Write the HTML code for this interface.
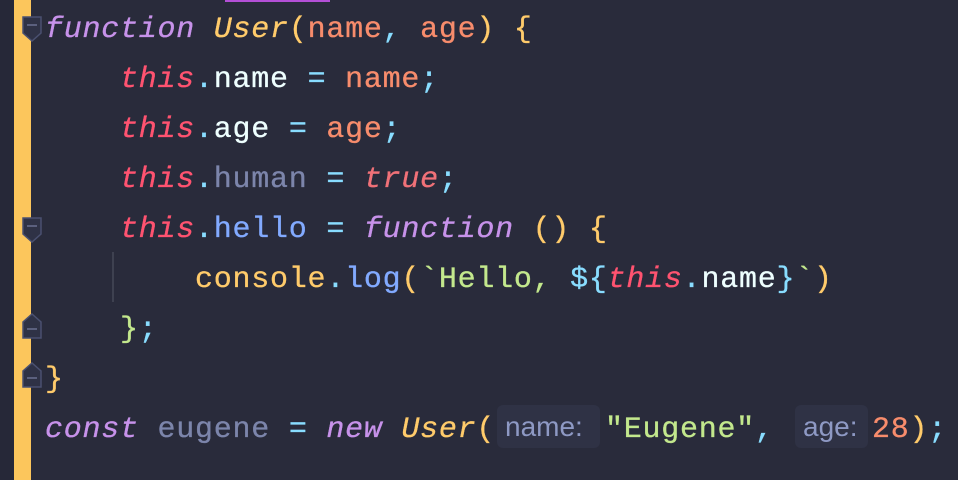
<!DOCTYPE html>
<html><head><meta charset="utf-8"><style>
html,body{margin:0;padding:0}
body{width:958px;height:480px;background:#292b3b;position:relative;overflow:hidden;font-family:"Liberation Mono",monospace;}
.l{position:absolute;left:45px;font-size:30px;letter-spacing:0.75px;white-space:pre;line-height:50px;height:50px;color:#eeffff;-webkit-text-stroke:0.3px currentColor}
.i{font-style:italic}
.kw{color:#c792ea;font-style:italic}
.fn{color:#ffcb6b}
.pa{color:#f78c6c}
.th{color:#ff5370;font-style:italic}
.op{color:#89ddff}
.gr{color:#7c85ab}
.bl{color:#82aaff}
.st{color:#c3e88d}
.tr{color:#f07178;font-style:italic}
.hint{position:absolute;top:405px;height:43px;background:#2f3245;border-radius:6px;color:#8e99c4;font-family:"Liberation Sans",sans-serif;font-size:28px;line-height:43px;padding:0 8px;box-sizing:border-box}
.fold{position:absolute;left:22px;width:20px;height:26px}
</style></head><body>
<div style="position:absolute;left:0;top:0;width:14px;height:480px;background:#262838"></div>
<div style="position:absolute;left:14px;top:0;width:17px;height:480px;background:#fcc65c"></div>
<div style="position:absolute;left:225px;top:0;width:105px;height:2px;background:#b34fd6"></div>
<div style="position:absolute;left:112px;top:252px;width:2px;height:50px;background:#3e4150"></div>

<svg class="fold" style="top:16px" viewBox="0 0 20 26"><path d="M1 1H19V17L10 25L1 17Z" fill="#2f3246" stroke="#4a5070" stroke-width="1.5"/><path d="M5 9H15" stroke="#6a7090" stroke-width="1.5"/></svg>
<svg class="fold" style="top:217px" viewBox="0 0 20 26"><path d="M1 1H19V17L10 25L1 17Z" fill="#2f3246" stroke="#4a5070" stroke-width="1.5"/><path d="M5 9H15" stroke="#6a7090" stroke-width="1.5"/></svg>
<svg class="fold" style="top:313px" viewBox="0 0 20 26"><path d="M1 25H19V9L10 1L1 9Z" fill="#2f3246" stroke="#4a5070" stroke-width="1.5"/><path d="M5 16H15" stroke="#6a7090" stroke-width="1.5"/></svg>
<svg class="fold" style="top:362px" viewBox="0 0 20 26"><path d="M1 25H19V9L10 1L1 9Z" fill="#2f3246" stroke="#4a5070" stroke-width="1.5"/><path d="M5 16H15" stroke="#6a7090" stroke-width="1.5"/></svg>

<div class="l" style="top:5px"><span class="kw">function</span> <span class="fn i">User</span><span class="fn">(</span><span class="pa">name</span><span class="op">,</span> <span class="pa">age</span><span class="fn">)</span> <span class="fn">{</span></div>
<div class="l" style="top:55px">    <span class="th">this</span><span class="op">.</span>name <span class="op">=</span> <span class="pa">name</span><span class="op">;</span></div>
<div class="l" style="top:105px">    <span class="th">this</span><span class="op">.</span>age <span class="op">=</span> <span class="pa">age</span><span class="op">;</span></div>
<div class="l" style="top:155px">    <span class="th">this</span><span class="op">.</span><span class="gr">human</span> <span class="op">=</span> <span class="tr">true</span><span class="op">;</span></div>
<div class="l" style="top:205px">    <span class="th">this</span><span class="op">.</span><span class="bl">hello</span> <span class="op">=</span> <span class="kw">function</span> <span class="fn">()</span> <span class="fn">{</span></div>
<div class="l" style="top:255px">        <span class="fn">console</span><span class="op">.</span><span class="bl">log</span><span class="fn">(</span><span class="st">`Hello, </span><span class="op">${</span><span class="th">this</span><span class="op">.</span>name<span class="op">}</span><span class="st">`</span><span class="fn">)</span></div>
<div class="l" style="top:305px">    <span class="st">}</span><span class="op">;</span></div>
<div class="l" style="top:355px"><span class="fn">}</span></div>
<div class="l" style="top:405px"><span class="kw">const</span> <span class="gr">eugene</span> <span class="op">=</span> <span class="kw">new</span> <span class="fn i">User</span><span class="fn">(</span></div>
<div class="hint" style="left:497px;width:103px">name:</div>
<div class="l" style="top:405px;left:605px"><span class="st">"Eugene"</span><span class="op">,</span></div>
<div class="hint" style="left:795px;width:73px">age:</div>
<div class="l" style="top:405px;left:872px"><span class="pa">28</span><span class="fn">)</span><span class="op">;</span></div>
</body></html>
